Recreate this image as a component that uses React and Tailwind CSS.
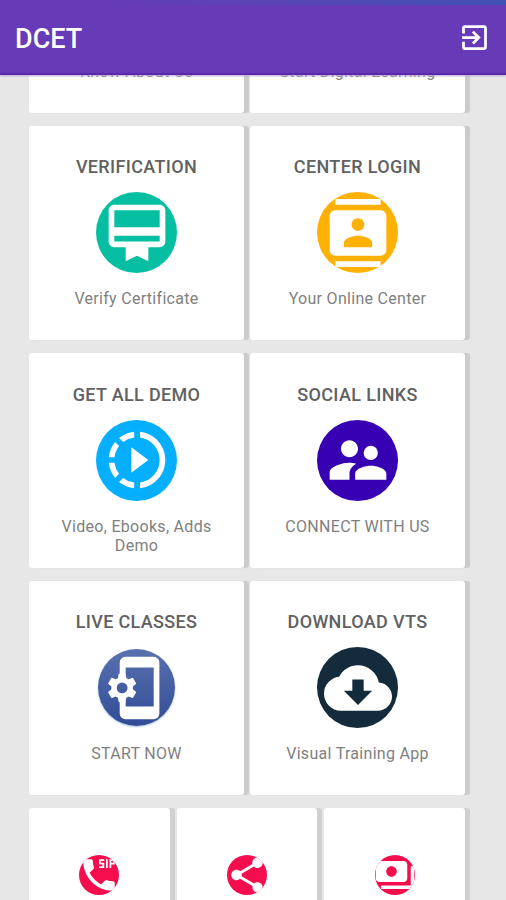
import {
  MdCardMembership,
  MdCloudDownload,
  MdContacts,
  MdDialerSip,
  MdExitToApp,
  MdPayments,
  MdShare,
  MdSlowMotionVideo,
  MdSupervisorAccount,
} from 'react-icons/md'

const PhoneSetup = ({ className }) => (
  <svg viewBox="0 0 24 24" className={className} fill="white">
    <path d="M5.900 7.100V3a2 2 0 0 1 2-2h10a2 2 0 0 1 2 2v18a2 2 0 0 1-2 2h-10a2 2 0 0 1-2-2v-4.100H8v1.600h9.900V4.800H8v2.300z" />
    <path
      d="M19.14 12.94c.04-.3.06-.61.06-.94 0-.32-.02-.64-.07-.94l2.030-1.580a.49.49 0 0 0 .12-.61l-1.920-3.320a.488.488 0 0 0-.59-.22l-2.390.96c-.5-.38-1.030-.7-1.620-.94l-.36-2.540a.484.484 0 0 0-.48-.41h-3.840c-.24 0-.43.17-.47.41l-.36 2.540c-.59.24-1.130.57-1.620.94l-2.390-.96c-.22-.08-.47 0-.59.22L2.740 8.870c-.12.21-.08.47.12.61l2.030 1.580c-.05.3-.09.63-.09.94s.02.64.07.94l-2.030 1.580a.49.49 0 0 0-.12.61l1.920 3.320c.12.22.37.29.59.22l2.390-.96c.5.38 1.030.7 1.620.94l.36 2.540c.05.24.24.41.48.41h3.840c.24 0 .44-.17.47-.41l.36-2.540c.59-.24 1.130-.56 1.620-.94l2.390.96c.22.08.47 0 .59-.22l1.920-3.320c.12-.22.07-.47-.12-.61l-2.010-1.580zM12 15.600A3.600 3.600 0 1 1 12 8.400a3.600 3.600 0 0 1 0 7.200z"
      transform="translate(0.4 5.6) scale(0.53)"
    />
  </svg>
)

const rows = [
  [
    { text: 'Know About Us', circle: 'size-[81px] bg-white' },
    { text: 'Start Digital Learning', circle: 'size-[81px] bg-white' },
  ],
  [
    { title: 'VERIFICATION', text: 'Verify Certificate', circle: 'size-[81px] bg-[#06bfa3]', Icon: MdCardMembership },
    { title: 'CENTER LOGIN', text: 'Your Online Center', circle: 'size-[81px] bg-[#ffb103]', Icon: MdContacts },
  ],
  [
    { title: 'GET ALL DEMO', text: 'Video, Ebooks, Adds Demo', circle: 'size-[81px] bg-[#05affd]', Icon: MdSlowMotionVideo },
    { title: 'SOCIAL LINKS', text: 'CONNECT WITH US', circle: 'size-[81px] bg-[#3700b3]', Icon: MdSupervisorAccount },
  ],
  [
    {
      title: 'LIVE CLASSES',
      text: 'START NOW',
      circle: 'size-[77px] bg-linear-to-b from-[#5a71ae] to-[#304c96] shadow-[0_1px_2px_#a9bfdc]',
      Icon: PhoneSetup,
    },
    { title: 'DOWNLOAD VTS', text: 'Visual Training App', circle: 'size-[81px] bg-[#132b3a]', Icon: MdCloudDownload },
  ],
]

const small = [MdDialerSip, MdShare, MdPayments]

function Card({ title, text, circle, Icon }) {
  return (
    <div className="flex h-[214.500px] flex-1 flex-col items-center rounded-[3px] bg-white px-6 pt-[29.500px] shadow-[5px_0_1px_#cbcbcb]">
      <h2 className="h-6 whitespace-nowrap text-[18px] leading-6 font-medium tracking-[0.350px] text-[#616161]">{title}</h2>
      <div className="mt-[13px] flex size-[81px] shrink-0 items-center justify-center">
        <div className={`flex shrink-0 items-center justify-center rounded-full text-white ${circle}`}>
          {Icon && <Icon className="size-[68px] shrink-0" />}
        </div>
      </div>
      <p className="mt-4 text-center text-[16px] leading-[19.500px] tracking-[0.300px] text-[#808080]">{text}</p>
    </div>
  )
}

export default function App() {
  return (
    <div className="flex h-[900px] w-[506px] flex-col overflow-hidden bg-[#e7e7e7] font-[Roboto,sans-serif]">
      <header className="z-10 flex h-[75px] shrink-0 flex-col border-b-2 border-[#5a28a8] bg-[#673ab7] shadow-[0_1px_2px_#b9a9d6]">
        <div className="h-[5px] bg-linear-to-r from-[#673ab7] from-20% to-[#3f51b5]" />
        <div className="flex flex-1 items-center justify-between pr-[15px] pb-[3px] pl-[15px] text-white">
          <h1 className="pt-[3px] text-[27px] leading-8 font-medium">DCET</h1>
          <MdExitToApp className="size-[33px]" />
        </div>
      </header>
      <main className="flex min-h-0 flex-1 flex-col justify-end overflow-hidden pr-[41px] pl-[29px]">
        <div className="flex flex-col gap-[13px]">
          {rows.map((row, i) => (
            <div key={i} className="flex gap-[6px]">
              {row.map((card) => (
                <Card key={card.text} {...card} />
              ))}
            </div>
          ))}
          <div className="flex h-[92px] gap-[7px]">
            {small.map((Icon, i) => (
              <div
                key={i}
                className="flex h-[140px] flex-1 flex-col items-center rounded-[3px] bg-white pt-[46.500px] shadow-[5px_0_1px_#d0d0d0]"
              >
                <div className="flex size-10 items-center justify-center overflow-hidden rounded-full bg-[#f50d4e] text-white">
                  <Icon className="size-[42px] shrink-0" />
                </div>
              </div>
            ))}
          </div>
        </div>
      </main>
    </div>
  )
}
